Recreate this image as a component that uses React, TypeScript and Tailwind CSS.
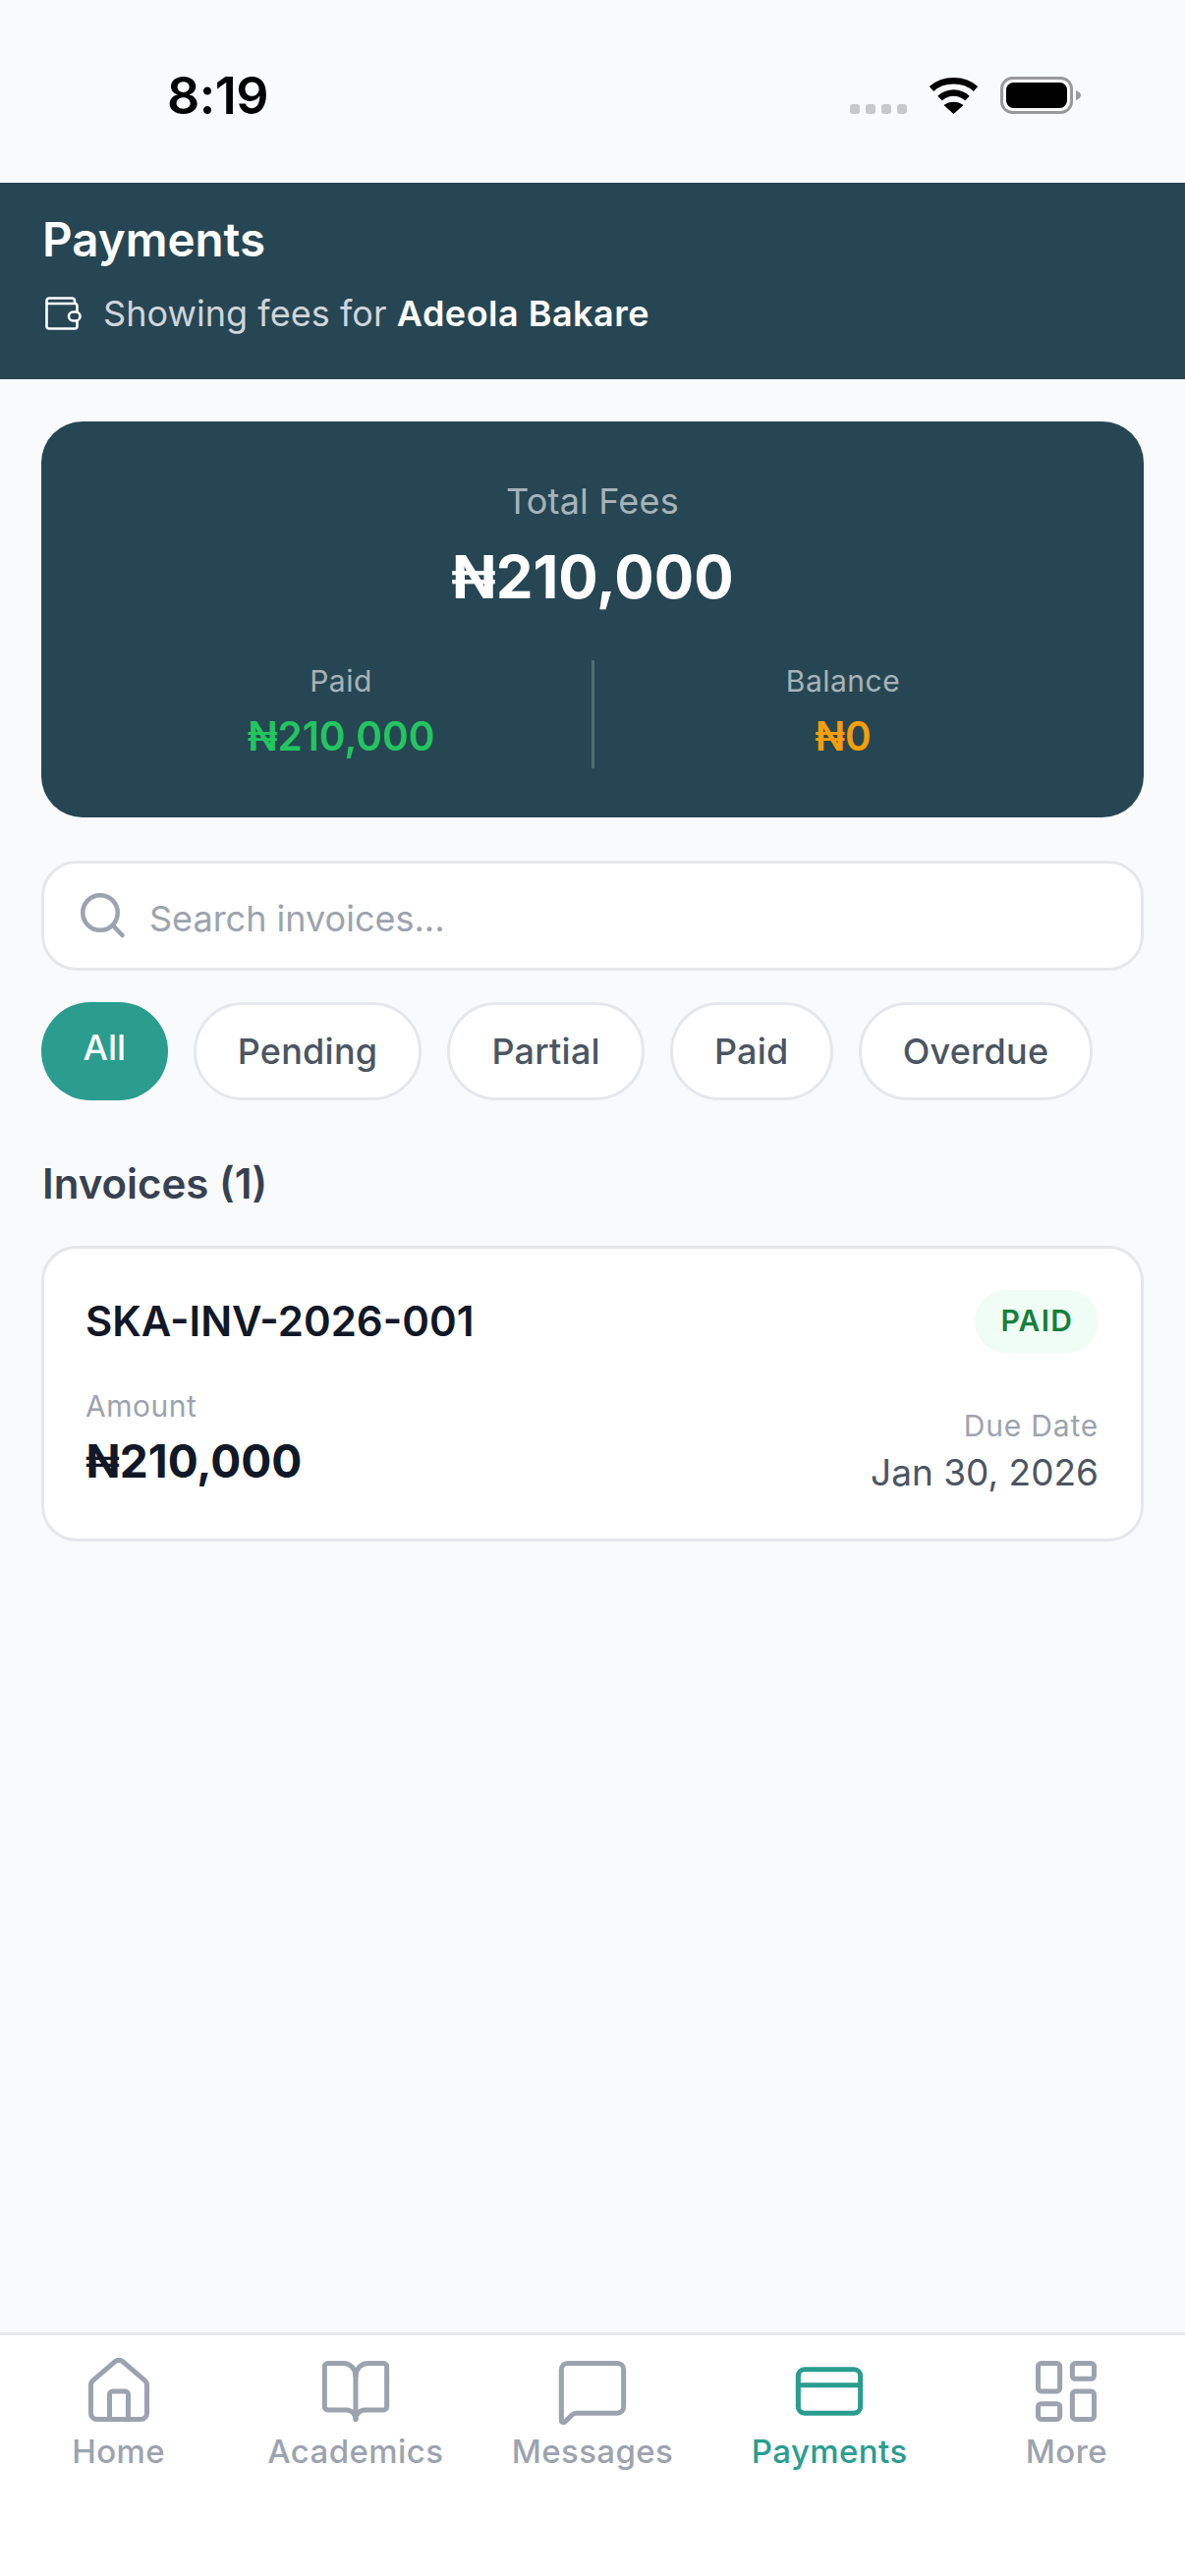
import { BookOpen, CreditCard, House, LayoutDashboard, MessageSquare } from "lucide-react";

const font = { fontFamily: "Inter, 'Noto Sans', sans-serif" };

// ── Status bar glyphs ─────────────────────────────────────────────────────────
function Wifi() {
  return (
    <svg width="51" height="38" viewBox="0 0 51 38" fill="none">
      <path d="M3 12.5C15 1.5 36 1.5 48 12.5" stroke="#000" strokeWidth="6.5" />
      <path d="M11.5 22C19.5 14.5 31.5 14.5 39.5 22" stroke="#000" strokeWidth="6.5" />
      <path d="M25.5 38L15.5 29C21 24.5 30 24.5 35.5 29Z" fill="#000" />
    </svg>
  );
}

function Battery() {
  return (
    <svg width="82" height="38" viewBox="0 0 82 38" fill="none">
      <rect x="1.5" y="1.5" width="71" height="35" rx="11" stroke="#999" strokeWidth="3" />
      <rect x="6" y="6" width="62" height="26" rx="7.5" fill="#000" />
      <path d="M77 14C80 15 82 17 82 19C82 21 80 23 77 24Z" fill="#999" />
    </svg>
  );
}

function WalletIcon() {
  return (
    <svg width="37" height="34" viewBox="0 0 37 34" fill="none" stroke="#fff" strokeWidth="2.6" strokeLinejoin="round">
      <path d="M30 7V4a2.5 2.5 0 0 0-2.5-2.5H4A2.5 2.5 0 0 0 1.5 4v26A2.5 2.5 0 0 0 4 32.5h26a2.5 2.5 0 0 0 2.5-2.5v-5" />
      <path d="M1.5 7H30a2.5 2.5 0 0 1 2.5 2.5V15" />
      <rect x="24" y="15.5" width="11.5" height="9" rx="4.5" />
    </svg>
  );
}

function SearchIcon() {
  return (
    <svg width="46" height="46" viewBox="0 0 46 46" fill="none" stroke="#9ca3af" strokeWidth="4.5" strokeLinecap="round">
      <circle cx="20" cy="20" r="17.75" />
      <path d="M33 33L42.5 43" />
    </svg>
  );
}

const filters = ["Pending", "Partial", "Paid", "Overdue"];

const tabs = [
  { label: "Home", Icon: House },
  { label: "Academics", Icon: BookOpen },
  { label: "Messages", Icon: MessageSquare },
  { label: "Payments", Icon: CreditCard, active: true },
  { label: "More", Icon: LayoutDashboard },
];

export default function App() {
  return (
    <div style={font} className="flex h-[2622px] w-[1206px] flex-col overflow-hidden bg-[#f9fafb]">
      {/* Status bar */}
      <div className="flex h-[186px] shrink-0 items-start justify-between pl-[170px] pr-[106px] pt-[68px]">
        <span className="text-[52px] leading-[60px] font-semibold tracking-[-0.5px] text-black">8:19</span>
        <div className="flex items-end gap-[22px] pt-[10px]">
          <div className="flex gap-[6px]">
            <span className="h-[10px] w-[10px] rounded-[3px] bg-[#c8c8c8]" />
            <span className="h-[10px] w-[10px] rounded-[3px] bg-[#c8c8c8]" />
            <span className="h-[10px] w-[10px] rounded-[3px] bg-[#c8c8c8]" />
            <span className="h-[10px] w-[10px] rounded-[3px] bg-[#c8c8c8]" />
          </div>
          <Wifi />
          <Battery />
        </div>
      </div>

      {/* Header */}
      <div className="flex h-[200px] shrink-0 flex-col bg-[#264653] pl-[43px] pt-[26px]">
        <div className="text-[47.5px] leading-[64px] font-semibold text-white">Payments</div>
        <div className="mt-[19px] flex items-center gap-[22px] pl-[3px]">
          <WalletIcon />
          <span className="text-[36px] leading-[48px] tracking-[0.05px] text-[#d1d5db]">
            Showing fees for <span className="font-semibold tracking-[0.5px] text-white">Adeola Bakare</span>
          </span>
        </div>
      </div>

      <div className="flex flex-1 flex-col px-[42px] pt-[43px]">
        {/* Totals */}
        <div className="flex h-[403px] flex-col items-center rounded-[42px] bg-[#264653] pt-[57px]">
          <div className="text-[36px] leading-[48px] tracking-[0.2px] text-white/60">Total Fees</div>
          <div className="mt-[15px] text-[60px] leading-[76px] font-bold text-white">₦210,000</div>
          <div className="mt-[46px] flex w-full pl-[50px]">
            <div className="flex w-[510px] flex-col items-center pt-[2px]">
              <div className="text-[30px] leading-[40px] tracking-[0.5px] text-white/60">Paid</div>
              <div className="mt-[9px] text-[40.5px] leading-[56px] font-semibold text-[#22c55e]">₦210,000</div>
            </div>
            <div className="mt-[1px] h-[110px] w-[3px] bg-white/20" />
            <div className="flex w-[506px] flex-col items-center pt-[2px]">
              <div className="text-[30px] leading-[40px] tracking-[0.5px] text-white/60">Balance</div>
              <div className="mt-[9px] text-[40.5px] leading-[56px] font-semibold text-[#f59e0b]">₦0</div>
            </div>
          </div>
        </div>

        {/* Search */}
        <div className="mt-[44px] flex h-[112px] items-center gap-[24px] rounded-[36px] border-[3px] border-[#e5e7eb] bg-white pl-[37px]">
          <SearchIcon />
          <span className="pt-[5px] text-[36px] text-[#9ca3af]">Search invoices...</span>
        </div>

        {/* Filter pills */}
        <div className="mt-[32px] flex gap-[26px]">
          <div className="flex h-[100px] items-center rounded-full bg-[#2a9d8f] px-[42.5px] pb-[8px] text-[36px] font-medium text-white">
            All
          </div>
          {filters.map((f) => (
            <div
              key={f}
              className="flex h-[100px] items-center rounded-full border-[3px] border-[#e5e7eb] bg-white px-[42px] text-[36px] font-medium tracking-[0.25px] text-[#4b5563]"
            >
              {f}
            </div>
          ))}
        </div>

        <div className="mt-[61px] pl-[1px] text-[42px] leading-[48px] font-semibold text-[#374151]">Invoices (1)</div>

        {/* Invoice card */}
        <div className="mt-[39px] flex h-[301px] flex-col rounded-[36px] border-[3px] border-[#e5e7eb] bg-white px-[43px] pt-[41px]">
          <div className="flex items-center justify-between">
            <span className="-ml-[1px] pt-[1px] text-[42px] leading-[64px] font-semibold text-[#111827]">SKA-INV-2026-001</span>
            <span className="flex h-[64px] items-center rounded-full bg-[#f0fdf4] px-[26px] text-[30px] font-semibold tracking-[1.2px] text-[#15803d]">
              PAID
            </span>
          </div>
          <div className="mt-[31px] flex items-end justify-between">
            <div>
              <div className="-ml-[1px] pt-[3px] text-[30px] leading-[40px] tracking-[0.5px] text-[#9ca3af]">Amount</div>
              <div className="mt-[6px] -ml-[1px] text-[46px] leading-[60px] font-bold text-[#111827]">₦210,000</div>
            </div>
            <div className="-mb-[6px] flex flex-col items-end">
              <div className="text-[30px] leading-[40px] tracking-[0.8px] text-[#9ca3af]">Due Date</div>
              <div className="mt-[4px] text-[37px] leading-[48px] text-[#4b5563]">Jan 30, 2026</div>
            </div>
          </div>
        </div>
      </div>

      {/* Bottom tabs */}
      <div className="flex h-[248px] shrink-0 border-t-[3px] border-[#e5e7eb] bg-white pt-[19px]">
        {tabs.map(({ label, Icon, active }) => (
          <div key={label} className="flex flex-1 flex-col items-center">
            <Icon size={76} strokeWidth={1.6} className={active ? "text-[#2a9d8f]" : "text-[#9ca3af]"} />
            <span className={`mt-[3px] text-[33px] leading-[40px] font-medium tracking-[0.4px] ${active ? "text-[#2a9d8f]" : "text-[#9ca3af]"}`}>
              {label}
            </span>
          </div>
        ))}
      </div>
    </div>
  );
}
